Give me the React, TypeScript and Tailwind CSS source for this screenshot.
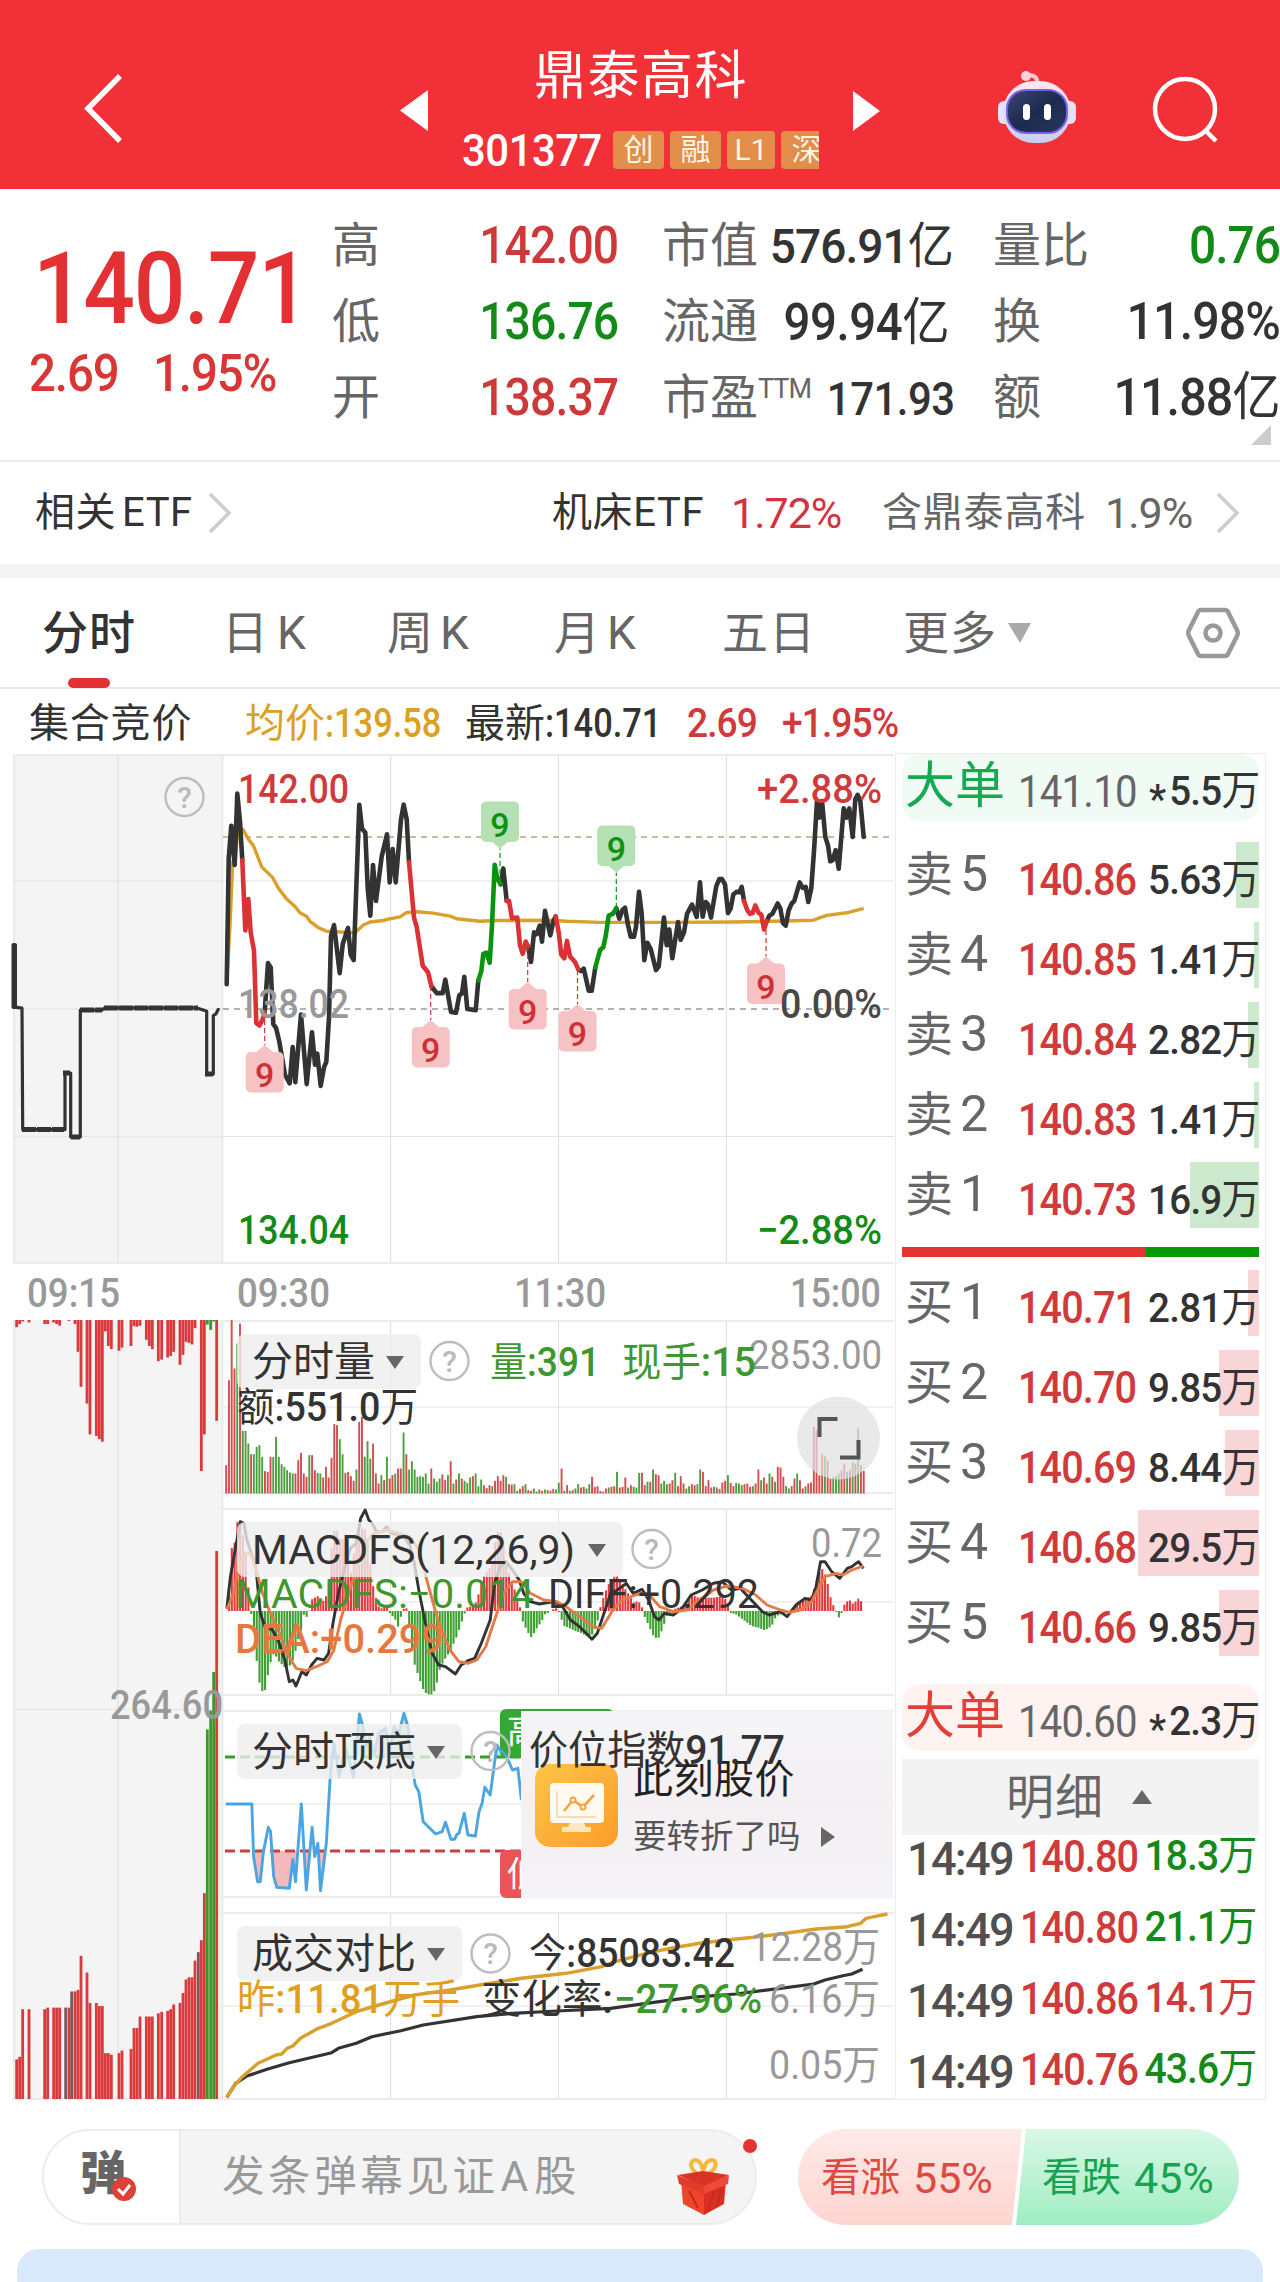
import { ReactNode } from "react"
import clsx from "clsx"

type Point = [number, number]

const RED = "#dc3235"
const GREEN = "#0a930f"
const INK = "#333333"
const GOLD = "#d9a02c"

// "x,y x,y ..." -> scaled svg points
function scale(data: string, ox: number, oy: number, sx: number, sy: number) {
  return data
    .split(" ")
    .map((p) => {
      const [x, y] = p.split(",").map(Number)
      return `${(ox + x / sx).toFixed(1)},${(oy + y / sy).toFixed(1)}`
    })
    .join(" ")
}

const morning = (d: string) => scale(d, 0, 740, 3, 2.703)
const afternoon = (d: string) => scale(d, 440, 740, 3, 2.703)
const volumeScale = (d: string) => scale(d, 200, 1300, 2.24, 3)
const lowerScale = (d: string) => scale(d, 200, 1690, 2.24, 3)

const priceSegments = [
  { color: INK, points: morning("680,660 686,320 694,232 704,338 712,145 720,220 727,325") },
  {
    color: INK,
    points: morning(
      "794,735 804,603 812,615 820,768 828,778 838,815 855,905 869,928 878,830 886,925 903,742 920,930 936,790 945,878 952,848 962,935 972,885 979,870 987,750 993,530 1002,500 1019,630 1028,552 1044,508 1052,580 1061,595 1078,175 1086,240 1096,250 1103,400 1111,475 1119,338 1128,435 1145,315 1161,255 1169,385 1178,295 1187,385 1203,215 1211,175 1220,215 1227,330"
    ),
  },
  { color: INK, points: morning("1294,665 1310,684 1328,684 1336,648 1353,735 1368,737 1378,690 1386,685 1393,640 1402,727 1427,730 1435,650") },
  { color: INK, points: afternoon("182,390 190,347 200,435") },
  { color: INK, points: afternoon("264,558 273,600 282,520 290,525 299,502 306,545 315,462 331,528 340,490 347,477") },
  { color: INK, points: afternoon("415,620 423,625 431,618 446,678 455,678 466,615") },
  {
    color: INK,
    points: afternoon(
      "529,455 538,483 547,460 555,453 564,500 572,532 582,532 588,505 597,410 605,470 613,595 622,548 632,565 648,622 656,612 672,480 680,555 688,512 697,590 714,492 722,540 732,520 741,470 756,445 770,478 780,385 788,478 797,438 804,445 813,480 829,395 838,376 846,376 855,390 864,468 872,455 880,418 890,410 898,412 905,397 912,435"
    ),
  },
  {
    color: INK,
    points: afternoon(
      "980,490 988,475 997,470 1013,442 1021,455 1029,495 1037,502 1046,460 1055,442 1063,435 1079,385 1088,400 1097,397 1105,438 1114,400 1122,300 1131,165 1138,210 1146,165 1156,262 1164,285 1171,328 1178,325 1187,298 1196,348 1211,185 1219,210 1228,185 1238,262 1246,160 1253,148 1261,165 1271,262"
    ),
  },
  { color: RED, points: morning("727,325 736,515 745,430 752,520 762,570 769,765 778,772 788,755 794,735") },
  { color: RED, points: morning("1227,330 1242,480 1250,505 1268,610 1284,628 1294,665") },
  { color: GREEN, points: afternoon("115,650 124,625 130,578 139,575 149,602 156,500 164,337 172,375 182,390") },
  { color: RED, points: afternoon("200,435 207,435 216,482 232,480 240,555 248,578 257,545 264,558") },
  { color: RED, points: afternoon("347,477 356,520 364,580 373,590 381,543 390,585 405,600 415,620") },
  { color: GREEN, points: afternoon("466,615 480,568 490,560 497,530 506,475 518,470 529,455") },
  { color: RED, points: afternoon("912,435 922,460 930,470 938,468 946,447 956,468 964,472 972,512 980,490") },
]

const averageLine =
  morning(
    "680,660 690,500 698,330 706,320 712,260 730,243 745,268 760,285 785,343 818,372 835,400 860,430 885,450 900,467 920,477 930,490 955,507 980,517 1020,519 1065,521 1090,500 1110,492 1150,488 1165,484 1200,478 1218,467 1250,464 1300,468 1350,476"
  ) +
  " " +
  afternoon("50,483 120,490 170,488 330,487 380,490 480,493 700,493 870,492 1000,490 1120,487 1160,474 1220,467 1271,455")

const auctionLine = morning(
  "46,722 66,725 68,1053 195,1053 195,900 212,900 212,1073 241,1073 241,730 305,730 315,724 590,724 610,730 620,733 620,903 640,903 640,745 648,740 655,728"
)

const signals = [
  { x: 264.7, tip: 1045, from: 1012, up: false },
  { x: 430.7, tip: 1020, from: 986, up: false },
  { x: 527.7, tip: 982, from: 946, up: false },
  { x: 577.5, tip: 1004, from: 970, up: false },
  { x: 766, tip: 956.5, from: 930, up: false },
  { x: 500, tip: 848.5, from: 882, up: true },
  { x: 616.3, tip: 872.5, from: 908, up: true },
]

const volumes = [
  85, 340, 520, 375, 450, 510, 188, 188, 150, 118, 118, 140, 145, 110, 67, 65, 110, 110, 170, 110, 88, 80, 70, 63, 60, 60,
  100, 122, 60, 50, 115, 115, 70, 62, 60, 48, 80, 48, 107, 208, 205, 163, 118, 62, 65, 52, 38, 72, 215, 230, 110, 157, 105,
  150, 60, 30, 55, 40, 110, 45, 55, 60, 75, 75, 183, 118, 72, 97, 72, 50, 52, 50, 60, 30, 75, 45, 35, 45, 57, 40, 55, 97, 30,
  42, 60, 45, 38, 32, 48, 52, 60, 22, 42, 25, 16, 25, 22, 38, 52, 38, 55, 50, 28, 27, 28, 8, 14, 22, 28, 10, 8, 15, 6, 12, 8,
  12, 10, 8, 14, 12, 32, 75, 8, 25, 8, 10, 15, 28, 18, 20, 15, 28, 50, 20, 22, 8, 6, 15, 18, 20, 22, 65, 18, 20, 48, 18, 25,
  20, 18, 62, 62, 25, 35, 35, 72, 58, 55, 30, 38, 28, 30, 40, 62, 22, 52, 30, 15, 22, 28, 25, 28, 72, 65, 22, 40, 18, 20, 18,
  14, 33, 38, 55, 32, 22, 32, 30, 25, 28, 30, 20, 22, 30, 72, 40, 48, 30, 60, 50, 35, 80, 78, 50, 22, 15, 22, 45, 60, 40, 15,
  22, 30, 33, 200, 190, 55, 118, 112, 98, 45, 50, 52, 60, 70, 90, 65, 70, 95, 90, 195, 85, 68,
]

const volumeSides =
  "rrrrgrgggrggggrrrggggggggrrrrrgrrggrrrrrrggrrrrgrrgggrrrgrgrrgrrgrggggggggrgggrrgrgrgrgggrgggrrrgrrrrgrrggrrgrrggrrgrrrggrgrgrggrrggrrrrgrgrrgrrrgrgggrrgrgrrgggrrgrrrggrrggrrrrgrgrrgrrgggrrrgrrgrrgrgrrrggrrgrrgrrrrrrgrrgggrrgrgrgrrrg"

const macdPoints: Point[] = [
  [58, 0], [64, 70], [71, 200], [77, 205], [83, 268], [90, 265], [97, 215], [103, 150], [108, 65], [113, 0], [115, -20], [121, -70],
  [127, -160], [133, -220], [140, -245], [146, -235], [152, -185], [158, -150], [165, -125], [175, -150], [190, -170], [200, -165],
  [210, -140], [218, -90], [225, -65], [232, -10], [240, -20], [245, 5], [250, 35], [262, 45], [275, 30], [282, 45], [288, 90],
  [294, 190], [300, 240], [307, 240], [313, 215], [325, 215], [337, 110], [345, 185], [357, 240], [365, 250], [372, 240], [380, 150],
  [387, 75], [395, 30], [402, 5], [420, 20], [425, -10], [435, -20], [444, -50], [452, 0], [460, 15], [466, -10], [470, -80],
  [480, -160], [490, -200], [500, -238], [508, -250], [518, -250], [527, -235], [535, -180], [545, -150], [560, -120], [575, -75],
  [590, -15], [597, 10], [610, 15], [620, 30], [627, 75], [637, 110], [645, 120], [655, 150], [663, 235], [672, 240], [680, 190],
  [690, 120], [700, 80], [715, 20], [722, -30], [732, -60], [742, -80], [752, -55], [765, -30], [772, -10], [780, -5], [790, 5],
  [800, 10], [806, -15], [815, -45], [825, -50], [840, -60], [852, -65], [865, -75], [880, -70], [890, -30], [896, 10], [905, 50],
  [918, 90], [930, 110], [940, 95], [950, 70], [960, 50], [970, 25], [980, 30], [988, 20], [993, -10], [1005, -45], [1015, -75],
  [1025, -85], [1035, -55], [1045, -15], [1052, -5], [1060, 5], [1090, 20], [1100, 50], [1115, 40], [1150, 40], [1170, 45],
  [1180, 30], [1187, -5], [1200, -10], [1215, -25], [1235, -45], [1250, -50], [1265, -58], [1280, -45], [1290, -15], [1310, -5],
  [1320, 0], [1330, 10], [1345, 30], [1360, 40], [1370, 45], [1380, 90], [1390, 130], [1397, 120], [1405, 85], [1412, 40],
  [1420, 10], [1425, -5], [1430, -20], [1437, -5], [1443, 20], [1453, 35], [1463, 20], [1473, 38], [1480, 30], [1486, -5],
]

function macdAt(x: number) {
  for (let i = 1; i < macdPoints.length; i++) {
    const [x0, y0] = macdPoints[i - 1]
    const [x1, y1] = macdPoints[i]
    if (x <= x1) return y0 + ((y1 - y0) * (x - x0)) / (x1 - x0)
  }
  return 0
}

const diffLine = volumeScale(
  "60,925 68,830 80,740 90,665 98,670 105,720 115,760 125,800 135,940 148,990 160,985 175,1020 190,1080 200,1145 208,1140 215,1158 228,1115 238,1125 250,1095 262,1075 278,1080 288,1060 298,970 310,880 325,800 337,745 350,730 360,655 370,630 378,660 388,675 395,695 408,695 418,680 428,700 455,705 470,735 480,790 490,870 505,970 520,1060 535,1095 550,1100 572,1122 585,1095 600,1082 615,1075 630,1030 650,960 660,850 672,800 685,785 700,810 715,840 725,880 740,905 760,912 790,905 810,915 830,960 850,980 865,1000 878,1018 890,1000 905,940 920,880 935,870 955,850 970,880 990,868 1005,900 1018,950 1028,960 1040,940 1060,945 1080,925 1100,885 1125,870 1150,850 1170,845 1190,870 1210,865 1235,900 1260,935 1275,945 1300,935 1315,950 1335,915 1355,895 1370,900 1380,860 1390,785 1400,785 1415,815 1433,835 1450,805 1460,800 1475,785 1486,805"
)

const deaLine = volumeScale(
  "60,928 75,880 88,800 100,760 112,760 122,790 140,880 155,930 175,990 195,1060 215,1105 238,1112 260,1100 285,1085 300,1050 315,960 335,870 355,790 375,720 390,700 420,690 445,700 470,710 490,750 510,850 535,970 560,1050 580,1085 600,1090 620,1080 640,1040 660,960 680,880 700,845 720,845 740,880 770,900 800,905 820,920 850,950 880,980 900,985 925,930 945,900 975,885 990,880 1010,890 1030,920 1060,935 1090,930 1120,900 1150,870 1180,858 1215,865 1245,885 1270,915 1300,930 1320,937 1345,930 1370,905 1385,865 1400,830 1425,820 1440,825 1460,810 1486,798"
)

const swingLine = lowerScale(
  "58,342 116,342 120,500 129,575 135,575 142,485 153,412 158,425 165,560 172,592 200,595 208,508 214,575 227,342 238,600 251,412 257,500 264,460 270,602 283,460 292,250 300,160 312,260 326,170 344,262 357,72 365,110 373,170 380,140 390,195 400,130 415,115 425,180 435,110 445,130 457,70 466,110 472,200 482,285 490,305 500,395 528,432 542,425 550,397 562,448 570,448 576,432 580,430 592,370 600,435 617,438 625,365 632,340 638,292 650,315 665,165 672,180 685,195 700,240 712,235 720,330"
)

const yesterdayLine = lowerScale(
  "60,1222 75,1190 95,1160 130,1120 155,1105 170,1095 183,1092 195,1075 208,1068 225,1045 265,1015 295,1000 350,965 400,945 480,915 560,900 640,882 720,865 820,850 900,830 930,815 1000,790 1060,773 1120,760 1180,750 1240,742 1300,732 1380,717 1450,710 1480,700 1492,685 1510,680 1540,672"
)

const todayLine = lowerScale(
  "60,1222 80,1180 105,1158 150,1138 200,1118 295,1088 310,1075 350,1060 385,1040 450,1022 500,1005 620,980 700,970 800,963 920,955 1000,940 1100,922 1200,912 1300,895 1375,882 1400,870 1440,857 1460,852 1484,838"
)

const unmatched =
  "50:52 59:46 68:41 87:43 134:46 143:46 161:43 170:46 179:49 207:40 225:46 234:99 243:166 261:198 270:257 289:260 298:266 307:271 316:60 325:88 334:94 357:97 366:91 393:88 402:50 411:51 420:49 439:76 448:88 457:94 475:117 485:114 503:110 512:107 521:99 540:124 549:105 558:80 567:82 576:85 585:54 604:327 613:257 622:47:g 632:57:g 641:41:g 650:231"

const matched =
  "50:1452 59:1447 68:1356 87:1356 134:1356 143:1353 161:1353 170:1353 179:1353 197:1353:k 207:1353 215:1322:k 225:1322 234:1319 243:1254 261:1286 270:1344 289:1344 298:1350 307:1350 316:1440 325:1440 334:1443 357:1440 366:1435 393:1432 402:1392 411:1392 420:1370 439:1370 448:1370 457:1370 475:1364 485:1361 503:1359 512:1356 521:1347 540:1344 549:1325 558:1299 567:1295 576:1295 585:1263 595:1247:k 604:1224 613:1134 622:821:g 632:785:g 641:711:g 650:480"

const barColor: Record<string, string> = { r: "#da3a3c", g: "#3b982b", k: "#76595b" }

function auctionBars(data: string) {
  return data.split(" ").map((item) => {
    const [x, y, side = "r"] = item.split(":")
    return { x: Number(x) / 3 - 1.4, y: 1300 + Number(y) / 1.912, color: barColor[side] }
  })
}

const hanRun = /([\u4e00-\u9fff]+)/

interface LabelProps {
  x: number
  y: number
  width: number
  color: string
  size?: number
  weight?: number
  children: string
}

// digits are medium, hanzi stay regular
function Label({ x, y, width, color, size = 40, weight = 500, children }: LabelProps) {
  return (
    <text x={x} y={y} textLength={width} lengthAdjust="spacingAndGlyphs" fill={color} fontSize={size} fontWeight={weight}>
      {children.split(hanRun).map((part, i) =>
        hanRun.test(part) ? (
          <tspan key={i} fontWeight={400}>
            {part}
          </tspan>
        ) : (
          part
        )
      )}
    </text>
  )
}

function Figure({ children, className }: { children: string; className?: string }) {
  return (
    <span className={clsx("inline-block font-medium", className)}>
      {children.split(hanRun).map((part, i) =>
        hanRun.test(part) ? (
          <span key={i} className="font-normal">
            {part}
          </span>
        ) : (
          part
        )
      )}
    </span>
  )
}

function HelpMark({ x, y }: { x: number; y: number }) {
  return (
    <g>
      <circle cx={x} cy={y} r={19} fill="none" stroke="#bdbdbd" strokeWidth={2.4} />
      <text x={x} y={y + 10.5} textAnchor="middle" fontSize={30} fontWeight={500} fill="#bababa">
        ?
      </text>
    </g>
  )
}

function Grid({ top, bottom, mid }: { top: number; bottom: number; mid: number[] }) {
  return (
    <g stroke="#e3e3e3" strokeWidth={1.2}>
      {[390.6, 558.5, 726.4].map((x) => (
        <line key={x} x1={x} x2={x} y1={top} y2={bottom} />
      ))}
      {mid.map((y) => (
        <line key={y} x1={223} x2={894} y1={y} y2={y} />
      ))}
      <line x1={223} x2={894} y1={top} y2={top} strokeWidth={2} stroke="#ebebeb" />
      <line x1={223} x2={894} y1={bottom} y2={bottom} strokeWidth={2} stroke="#ebebeb" />
    </g>
  )
}

function Signal({ x, tip, from, up }: { x: number; tip: number; from: number; up: boolean }) {
  const top = up ? tip - 47 : tip + 7
  const color = up ? GREEN : "#cf3036"
  const base = up ? tip - 7.5 : tip + 7.5
  return (
    <g>
      <line x1={x} x2={x} y1={from} y2={tip} stroke={color} strokeWidth={1.2} strokeDasharray="5 3" />
      <path d={`M${x - 9} ${base}L${x} ${tip}L${x + 9} ${base}Z`} fill={up ? "#b4e0b3" : "#f6c2c3"} />
      <rect x={x - 19} y={top} width={38} height={40.5} rx={5} fill={up ? "#b4e0b3" : "#f6c2c3"} />
      <text x={x} y={top + 35} textAnchor="middle" fontSize={34} fontWeight={500} fill={color}>
        9
      </text>
    </g>
  )
}

function ChartCanvas() {
  return (
    <svg width={895} height={1346} viewBox="0 754 895 1346" className="block font-['Roboto','Noto_Sans_CJK_SC',sans-serif]">
      <defs>
        <clipPath id="above">
          <rect x={220} y={1700} width={301} height={57} />
        </clipPath>
        <clipPath id="below">
          <rect x={220} y={1851} width={301} height={60} />
        </clipPath>
      </defs>

      {/* call auction background */}
      <rect x={13} y={755} width={209} height={508} fill="#f4f4f4" />
      <rect x={13} y={1320} width={209} height={779} fill="#f4f4f4" />
      <g stroke="#e6e6e6" strokeWidth={1.6} fill="none">
        <path d="M14 755V1263M118 755V1263M222.5 755V1263M14 1320V2099M118 1320V2099M222.5 1320V2099" />
        <path d="M13 755H223M13 881H223M13 1009H223M13 1136.5H223M13 1263H223M13 1709.5H223M13 2099H223" />
      </g>

      {/* price */}
      <Grid top={755} bottom={1263} mid={[881, 1136.5]} />
      <line x1={223} x2={890} y1={837} y2={837} stroke="#b8a47c" strokeWidth={1.6} strokeDasharray="6 5" />
      <line x1={223} x2={890} y1={1009} y2={1009} stroke="#999" strokeWidth={1.6} strokeDasharray="6 5" />
      <polyline points={averageLine} fill="none" stroke={GOLD} strokeWidth={3.4} strokeLinejoin="round" />
      {priceSegments.map((s) => (
        <polyline
          key={s.points}
          points={s.points}
          fill="none"
          stroke={s.color}
          strokeWidth={4.6}
          strokeLinejoin="round"
          strokeLinecap="round"
        />
      ))}
      <polyline points={auctionLine} fill="none" stroke={INK} strokeWidth={3.2} strokeLinejoin="round" strokeLinecap="round" />
      <rect x={11.5} y={943} width={5.5} height={66} rx={2} fill={INK} />
      <path d="M22 1129.6H64M80 1010H102M104 1008H198M63 1073H70M71 1137H80M205 1074H213" stroke={INK} strokeWidth={5} strokeDasharray="14 1" />
      {signals.map((s) => (
        <Signal key={s.x} {...s} />
      ))}
      <HelpMark x={184.5} y={797} />
      <Label x={238} y={803} width={111} color="#d03a3a">142.00</Label>
      <Label x={238} y={1018} width={111} color="#999">138.02</Label>
      <Label x={238} y={1244} width={111} color="#148a18">134.04</Label>
      <Label x={757} y={803} width={125} color="#d03a3a">+2.88%</Label>
      <Label x={780} y={1018} width={102} color="#484848">0.00%</Label>
      <Label x={757} y={1244} width={125} color="#148a18">−2.88%</Label>
      <Label x={27} y={1307} width={93} color="#999">09:15</Label>
      <Label x={237} y={1307} width={93} color="#999">09:30</Label>
      <Label x={514} y={1307} width={92} color="#999">11:30</Label>
      <Label x={790} y={1307} width={91} color="#999">15:00</Label>

      {/* call auction volume */}
      {auctionBars(unmatched).map((b) => (
        <rect key={b.x} x={b.x} y={1320} width={2.8} height={b.y - 1320} fill={b.color} />
      ))}
      {auctionBars(matched).map((b) => (
        <rect key={b.x} x={b.x} y={b.y} width={2.8} height={2099 - b.y} fill={b.color} />
      ))}
      <Label x={110} y={1719} width={113} color="#999">264.60</Label>

      {/* volume */}
      <Grid top={1321} bottom={1493} mid={[1407]} />
      {volumes.map((v, i) => (
        <rect
          key={i}
          x={225.2 + i * 2.772}
          y={1493.5 - v / 3}
          width={1.9}
          height={v / 3}
          fill={volumeSides[i] === "g" ? "#4b9f3e" : "#d44c50"}
        />
      ))}
      <Label x={749} y={1369} width={133} color="#999" weight={400}>2853.00</Label>

      {/* macd */}
      <Grid top={1509} bottom={1695} mid={[1602]} />
      {Array.from({ length: 231 }, (_, i) => {
        const v = macdAt(58 + i * 6.21)
        return (
          <rect
            key={i}
            x={225.2 + i * 2.772}
            y={v > 0 ? 1611 - v / 3 : 1611}
            width={2.1}
            height={Math.abs(v) / 3}
            fill={v > 0 ? "#e23a3c" : "#3f9f31"}
          />
        )
      })}
      <polyline points={diffLine} fill="none" stroke={INK} strokeWidth={2.9} strokeLinejoin="round" />
      <polyline points={deaLine} fill="none" stroke="#e47a48" strokeWidth={2.9} strokeLinejoin="round" />
      <Label x={811} y={1557} width={71} color="#999" weight={400}>0.72</Label>

      {/* intraday top / bottom */}
      <Grid top={1711} bottom={1897} mid={[1804]} />
      <polygon points={`226,1757 ${swingLine} 521,1757`} fill="#bfe6c9" clipPath="url(#above)" />
      <polygon points={`226,1851 ${swingLine} 521,1851`} fill="#f5b9bb" clipPath="url(#below)" />
      <line x1={225} x2={521} y1={1757} y2={1757} stroke="#3a9a2c" strokeWidth={3} strokeDasharray="10 5" />
      <line x1={225} x2={521} y1={1851} y2={1851} stroke="#c84040" strokeWidth={3} strokeDasharray="10 5" />
      <rect x={500} y={1709} width={114} height={49} rx={6} fill="#33a834" />
      <rect x={500} y={1850} width={114} height={48} rx={6} fill="#ea5458" />
      <text x={507} y={1743} fontSize={34} fill="#fff">高</text>
      <text x={507} y={1886} fontSize={34} fill="#fff">低</text>
      <polyline points={swingLine} fill="none" stroke="#4aa5e0" strokeWidth={2.9} strokeLinejoin="round" />

      {/* turnover comparison */}
      <Grid top={1913} bottom={2099} mid={[2006]} />
      <polyline points={todayLine} fill="none" stroke={INK} strokeWidth={3.2} strokeLinejoin="round" />
      <polyline points={yesterdayLine} fill="none" stroke={GOLD} strokeWidth={3.4} strokeLinejoin="round" />
      <Label x={750} y={1961} width={130} color="#999" weight={400}>12.28万</Label>
      <Label x={769} y={2013} width={111} color="#999" weight={400}>6.16万</Label>
      <Label x={769} y={2079} width={111} color="#999" weight={400}>0.05万</Label>
    </svg>
  )
}

// readings drawn on top of the indicator chips and the promo card
function ChartReadings() {
  return (
    <svg
      width={895}
      height={1346}
      viewBox="0 754 895 1346"
      className="absolute left-0 top-0 font-['Roboto','Noto_Sans_CJK_SC',sans-serif]"
    >
      <HelpMark x={449.5} y={1361} />
      <Label x={490} y={1376} width={110} color="#3f9730">量:391</Label>
      <Label x={622} y={1376} width={134} color="#3f9730">现手:15</Label>
      <Label x={237} y={1421} width={181} color={INK}>额:551.0万</Label>

      <HelpMark x={651.5} y={1549} />
      <Label x={235} y={1608} width={299} color="#3f9730" weight={400}>MACDFS:−0.014</Label>
      <Label x={548} y={1608} width={211} color={INK} weight={400}>DIFF:+0.292</Label>
      <Label x={235} y={1653} width={209} color="#e6783f">DEA:+0.299</Label>

      <HelpMark x={490.5} y={1751} />
      <Label x={529} y={1764} width={256} color={INK}>价位指数91.77</Label>

      <HelpMark x={490.5} y={1953.5} />
      <Label x={529} y={1967} width={206} color={INK}>今:85083.42</Label>
      <Label x={237} y={2013} width={223} color="#dfa022">昨:11.81万手</Label>
      <Label x={481} y={2013} width={132} color={INK}>变化率:</Label>
      <Label x={614} y={2013} width={148} color="#3f9730">−27.96%</Label>

      <circle cx={838.5} cy={1438} r={41.5} fill="#e0e0e0" fillOpacity={0.72} />
      <path d="M837.5 1419H819.500V1437M858.5 1440V1457.500H840" fill="none" stroke="#555" strokeWidth={4} />
    </svg>
  )
}

function Chip({ children, className }: { children: ReactNode; className: string }) {
  return (
    <div
      className={clsx(
        "absolute left-[237px] flex h-[55px] items-center justify-between rounded-lg bg-[#ededed]/80 pl-[15px] pr-[17px] pt-px text-[41px] leading-none text-[#333]",
        className
      )}
    >
      <span className="whitespace-nowrap">{children}</span>
      <svg width="18" height="13" viewBox="0 0 18 13">
        <path d="M0 0H18L9 13Z" fill="#666" />
      </svg>
    </div>
  )
}

function PromoCard() {
  return (
    <div className="absolute left-[521px] top-[957px] flex h-[188px] w-[372px] gap-[15px] bg-linear-to-b from-[#f5f5f8] via-[#f4eff2] to-[#f5f4f8] pl-3.5 pt-[53px]">
      <svg width="83" height="83" viewBox="0 0 83 83" className="shrink-0">
        <defs>
          <linearGradient id="promo" x1="0" y1="0" x2="1" y2="1">
            <stop offset="0" stopColor="#fdc446" />
            <stop offset="1" stopColor="#fd9c2b" />
          </linearGradient>
        </defs>
        <rect width="83" height="83" rx="15" fill="url(#promo)" />
        <rect x="15" y="19" width="54" height="40" rx="4" fill="#fffaf0" />
        <path d="M35 59H49L51 63H56V68H27V63H33Z" fill="#fde7c0" />
        <path d="M22 27V53H61" fill="none" stroke="#f6dcb8" strokeWidth="2" />
        <path d="M29 47L38 36L48 43L59 31" fill="none" stroke="#f4a340" strokeWidth="2.6" />
        <circle cx="38" cy="36" r="2.5" fill="#fff" stroke="#f4a340" strokeWidth="2" />
        <circle cx="48" cy="43" r="2.5" fill="#fff" stroke="#f4a340" strokeWidth="2" />
      </svg>
      <div className="flex flex-col gap-[20px] leading-none">
        <span className="-mt-1 text-[40px] tracking-[0.5px] text-[#222]">此刻股价</span>
        <span className="flex items-center gap-5 text-[33.5px] text-[#555]">
          要转折了吗
          <svg width="14" height="20" viewBox="0 0 14 20">
            <path d="M0 0L14 10L0 20Z" fill="#666" />
          </svg>
        </span>
      </div>
    </div>
  )
}

function RobotIcon() {
  return (
    <svg width="80" height="76" viewBox="0 0 80 76">
      <defs>
        <linearGradient id="visor" x1="0" y1="0" x2="1" y2="1">
          <stop offset="0" stopColor="#3c4676" />
          <stop offset="0.5" stopColor="#1e2a4f" />
          <stop offset="1" stopColor="#28365f" />
        </linearGradient>
        <linearGradient id="shell" x1="0" y1="0" x2="0" y2="1">
          <stop offset="0" stopColor="#ffe9ee" />
          <stop offset="1" stopColor="#c9cdf2" />
        </linearGradient>
      </defs>
      <path d="M40 14C41 8 38 5 31 5" fill="none" stroke="#f9cfd6" strokeWidth="4" />
      <circle cx="29" cy="6" r="5" fill="#fbd3da" />
      <rect x="1" y="31" width="78" height="23" rx="6" fill="#e4e2fa" />
      <rect x="6" y="11" width="68" height="62" rx="31" fill="url(#shell)" />
      <rect x="10" y="20" width="60" height="43" rx="19" fill="url(#visor)" stroke="#7a5fe8" strokeWidth="2" />
      <rect x="26" y="34" width="7" height="16" rx="3.5" fill="#fff" />
      <rect x="47" y="34" width="7" height="16" rx="3.5" fill="#fff" />
    </svg>
  )
}

function Header() {
  return (
    <header className="flex h-[189px] items-start bg-[#f13037] text-white">
      <svg width="44" height="72" viewBox="0 0 44 72" className="ml-[81px] mt-[73px]">
        <path d="M39 3L7 35.500L39 68" fill="none" stroke="#fff" strokeWidth="5.500" />
      </svg>
      <svg width="28" height="41" viewBox="0 0 28 41" className="ml-[275px] mt-[90px]">
        <path d="M28 0V41L0 20.500Z" fill="#fff" />
      </svg>
      <div className="ml-[34px] mt-[49px] w-[357px]">
        <h1 className="ml-[72px] h-[56px] text-[52px] font-normal leading-[56px] tracking-[1.5px]">鼎泰高科</h1>
        <div className="mt-[26px] flex h-[38px] items-center gap-1.5 overflow-hidden text-[30px] leading-none text-[#fff6e6]">
          <span className="mr-[7px] w-[138px] shrink-0 origin-left scale-x-[0.93] text-[45px] font-medium tracking-[-0.5px] text-white">
            301377
          </span>
          <span className="flex h-[38px] w-[51px] shrink-0 items-center justify-center rounded bg-[#e38d4a]">创</span>
          <span className="flex h-[38px] w-[51px] shrink-0 items-center justify-center rounded bg-[#e38d4a]">融</span>
          <span className="flex h-[38px] w-[48px] shrink-0 items-center justify-center rounded bg-[#e38d4a]">L1</span>
          <span className="flex h-[38px] w-[51px] shrink-0 items-center justify-center rounded-l bg-[#e38d4a]">深</span>
        </div>
      </div>
      <svg width="27" height="40" viewBox="0 0 27 40" className="ml-[34px] mt-[91px]">
        <path d="M0 0V40L27 20Z" fill="#fff" />
      </svg>
      <div className="ml-[117px] mt-[70px]">
        <RobotIcon />
      </div>
      <svg width="70" height="70" viewBox="0 0 70 70" className="ml-[74px] mt-[75px]">
        <circle cx="34" cy="34" r="30" fill="none" stroke="#fff" strokeWidth="4.500" />
        <path d="M54 55L65 66" stroke="#fff" strokeWidth="4.500" />
      </svg>
    </header>
  )
}

interface StatProps {
  label: ReactNode
  value: string
  className?: string
}

function Stat({ label, value, className }: StatProps) {
  return (
    <div className="flex h-[76px] items-center justify-between whitespace-nowrap">
      <span className="text-[48px] tracking-normal text-[#666]">{label}</span>
      <Figure className={clsx("origin-right", className)}>{value}</Figure>
    </div>
  )
}

function Quote() {
  return (
    <section className="relative flex h-[271px] leading-none">
      <div className="w-[332px] shrink-0 pl-[29px] pt-[49px] text-[#d93636]">
        <div className="ml-[4px] origin-left scale-x-[0.9] text-[101px] font-medium tracking-[-1.5px] text-[#e33033]">
          140.71
        </div>
        <div className="mt-[9px] flex origin-left scale-x-[0.93] gap-[37px] text-[51px] font-medium tracking-[-1.2px]">
          <span>2.69</span>
          <span>1.95%</span>
        </div>
      </div>
      <div className="w-[286px] shrink-0 pt-[19px] text-[52px] tracking-[-1px]">
        <Stat label="高" value="142.00" className="scale-x-[0.89] text-[#cf3838]" />
        <Stat label="低" value="136.76" className="scale-x-[0.89] text-[#148a18]" />
        <Stat label="开" value="138.37" className="scale-x-[0.89] text-[#cf3838]" />
      </div>
      <div className="ml-[44px] w-[287px] shrink-0 pt-[19px] text-[#333]">
        <Stat label="市值" value="576.91亿" className="scale-x-[0.94] text-[49px] tracking-[-1px]" />
        <Stat label="流通" value="99.94亿" className="scale-x-[0.93] text-[51px] tracking-[-0.5px]" />
        <Stat
          label={
            <>
              市盈<sup className="relative -top-4 align-baseline text-[27px] tracking-[-1px]">TTM</sup>
            </>
          }
          value="171.93"
          className="scale-x-[0.89] text-[47px] tracking-[-0.5px]"
        />
      </div>
      <div className="ml-[44px] w-[287px] shrink-0 pt-[19px] text-[52px] tracking-[-1px] text-[#333]">
        <Stat label="量比" value="0.76" className="scale-x-[0.92] text-[#148a18]" />
        <Stat label="换" value="11.98%" className="scale-x-[0.93]" />
        <Stat label="额" value="11.88亿" className="scale-x-[0.93]" />
      </div>
      <svg width="20" height="20" viewBox="0 0 20 20" className="absolute bottom-[15px] right-[9px]">
        <path d="M20 0V20H0Z" fill="#ccc" />
      </svg>
    </section>
  )
}

function Chevron() {
  return (
    <svg width="24" height="42" viewBox="0 0 24 42">
      <path d="M2 2L21 21L2 40" fill="none" stroke="#ccc" strokeWidth="3.5" />
    </svg>
  )
}

function RelatedEtf() {
  return (
    <section className="flex h-[104px] items-center whitespace-nowrap border-t-2 border-[#ececec] pl-[35px] text-[40px] leading-none text-[#333]">
      <span className="w-[173px] tracking-[0.5px]">
        相关<span className="ml-1.5">ETF</span>
      </span>
      <Chevron />
      <span className="ml-[320px] w-[179px] tracking-[0.6px]">机床ETF</span>
      <span className="w-[151px] text-[43px] tracking-[-1px] text-[#d0343f]">1.72%</span>
      <span className="w-[223px] tracking-[0.8px] text-[#666]">含鼎泰高科</span>
      <span className="w-[111px] text-[43px] tracking-[-1px] text-[#666]">1.9%</span>
      <Chevron />
    </section>
  )
}

function Tabs() {
  return (
    <nav className="flex h-[111px] items-center whitespace-nowrap border-b-2 border-[#e9e9e9] pl-[42px] text-[46px] leading-none tracking-[1px] text-[#666]">
      <span className="relative w-[180px] font-medium text-[#333]">
        分时
        <span className="absolute -bottom-[32px] left-[26px] h-[10px] w-[42px] rounded-full bg-[#e33033]" />
      </span>
      <span className="w-[165px]">日<span className="ml-2">K</span></span>
      <span className="w-[167px]">周<span className="ml-1.5">K</span></span>
      <span className="w-[168px]">月<span className="ml-1.5">K</span></span>
      <span className="w-[181px]">五日</span>
      <span className="w-[104px]">更多</span>
      <svg width="25" height="20" viewBox="0 0 25 20">
        <path d="M1 0H24L13 20Z" fill="#aaa" />
      </svg>
      <svg width="54" height="52" viewBox="0 0 54 52" className="ml-[154px]">
        <path
          d="M15 3H39Q41 3 42 5L51 23Q52.5 26 51 29L42 47Q41 49 39 49H15Q13 49 12 47L3 29Q1.5 26 3 23L12 5Q13 3 15 3Z"
          fill="none"
          stroke="#999"
          strokeWidth="4.5"
        />
        <circle cx="27" cy="26" r="7.5" fill="none" stroke="#999" strokeWidth="4.5" />
      </svg>
    </nav>
  )
}

interface Order {
  label: string
  level: number
  price: string
  volume: string
  bar: number
}

const asks: Order[] = [
  { label: "卖", level: 5, price: "140.86", volume: "5.63万", bar: 23 },
  { label: "卖", level: 4, price: "140.85", volume: "1.41万", bar: 5 },
  { label: "卖", level: 3, price: "140.84", volume: "2.82万", bar: 11 },
  { label: "卖", level: 2, price: "140.83", volume: "1.41万", bar: 5 },
  { label: "卖", level: 1, price: "140.73", volume: "16.9万", bar: 69 },
]

const bids: Order[] = [
  { label: "买", level: 1, price: "140.71", volume: "2.81万", bar: 11 },
  { label: "买", level: 2, price: "140.70", volume: "9.85万", bar: 40 },
  { label: "买", level: 3, price: "140.69", volume: "8.44万", bar: 34 },
  { label: "买", level: 4, price: "140.68", volume: "29.5万", bar: 121 },
  { label: "买", level: 5, price: "140.66", volume: "9.85万", bar: 40 },
]

const trades = [
  { time: "14:49", price: "140.80", volume: "18.3万", up: false },
  { time: "14:49", price: "140.80", volume: "21.1万", up: false },
  { time: "14:49", price: "140.86", volume: "14.1万", up: true },
  { time: "14:49", price: "140.76", volume: "43.6万", up: false },
]

function OrderRow({ order, ask }: { order: Order; ask?: boolean }) {
  return (
    <div className="relative flex h-[66px] items-center">
      <div
        className={clsx("absolute inset-y-0 right-0", ask ? "bg-[#cde9cd]" : "bg-[#f8d5d6]")}
        style={{ width: order.bar }}
      />
      <span className="relative -mt-0.5 w-[116px] shrink-0 pl-[3px] text-[48px] text-[#666]">
        {order.label}
        <span className="ml-[7px] text-[50px]">{order.level}</span>
      </span>
      <Figure className="relative mt-2.5 origin-left scale-x-[0.9] text-[44px] tracking-[-1px] text-[#d03a3a]">
        {order.price}
      </Figure>
      <Figure className="absolute right-0 mt-2.5 origin-right scale-x-[0.94] text-[41px] tracking-[-0.8px] text-[#333]">
        {order.volume}
      </Figure>
    </div>
  )
}

function BigOrder({ price, volume, className }: { price: string; volume: string; className: string }) {
  return (
    <div className={clsx("relative flex h-[67px] items-center rounded-[18px]", className)}>
      <span className="-mt-1 w-[116px] shrink-0 pl-[3px] text-[50px]">大单</span>
      <span className="mt-2 origin-left scale-x-[0.91] text-[44px] tracking-[-0.8px] text-[#666]">{price}</span>
      <span className="absolute right-0 mt-2 origin-right scale-x-[0.94] text-[41px] tracking-[-0.8px] text-[#333]">
        <span className="relative top-2 mr-1 font-medium">*</span>
        <Figure>{volume}</Figure>
      </span>
    </div>
  )
}

function OrderBook() {
  return (
    <aside className="h-[1347px] w-[371px] border border-[#ececec] px-[6px] leading-none whitespace-nowrap">
      <BigOrder price="141.10" volume="5.5万" className="bg-[#f1fbf6] text-[#15a951]" />
      <div className="mt-[21px] flex flex-col gap-[14px]">
        {asks.map((o) => (
          <OrderRow key={o.level} order={o} ask />
        ))}
      </div>
      <div className="mt-[19px] flex h-[10px]">
        <div className="w-[244px] bg-[#e23232]" />
        <div className="grow bg-[#059a05]" />
      </div>
      <div className="mt-[13px] flex flex-col gap-[14px]">
        {bids.map((o) => (
          <OrderRow key={o.level} order={o} />
        ))}
      </div>
      <div className="mt-[28px]">
        <BigOrder price="140.60" volume="2.3万" className="bg-[#fff3f2] text-[#e43f36]" />
      </div>
      <div className="mt-[8px] flex h-[76px] items-center bg-[#f3f3f3] pl-[104px] text-[48px] text-[#666]">
        <span className="w-[126px] pt-0.5 tracking-[1px]">明细</span>
        <svg width="20" height="14" viewBox="0 0 20 14">
          <path d="M0 14L10 0L20 14Z" fill="#666" />
        </svg>
      </div>
      {trades.map((t, i) => (
        <div key={i} className="relative flex h-[71px] items-start pl-[5px] font-medium">
          <span className="w-[113px] origin-left scale-x-[0.96] text-[47px] tracking-[-1.8px] text-[#505050]">{t.time}</span>
          <Figure className="origin-left scale-x-[0.9] text-[44px] tracking-[-1px] text-[#d03a3a]">{t.price}</Figure>
          <Figure
            className={clsx(
              "absolute right-[3px] origin-right scale-x-[0.93] text-[42px] tracking-[-1px]",
              t.up ? "text-[#d03a3a]" : "text-[#148a18]"
            )}
          >
            {t.volume}
          </Figure>
        </div>
      ))}
    </aside>
  )
}

function GiftIcon() {
  return (
    <svg width="54" height="58" viewBox="0 0 54 58">
      <path d="M27 17C14 15 12 3 19 2C25 2 27 10 27 17C27 10 30 2 36 2C43 3 40 15 27 17Z" fill="none" stroke="#f4b83c" strokeWidth="4" />
      <path d="M2 17L27 13L53 17L28 29Z" fill="#d93327" />
      <path d="M5 22L28 29V57L7 46Z" fill="#f0442c" />
      <path d="M28 29L50 22L48 46L28 57Z" fill="#d92f22" />
      <path d="M1 17L28 28V36L3 26Z" fill="#e23a2b" />
      <path d="M28 28L53 17L52 26L28 36Z" fill="#ef4a38" />
      <path d="M13 33L22 50M38 33L32 52M45 30L41 48" stroke="#c9281d" strokeWidth="2" />
    </svg>
  )
}

function BottomBar() {
  return (
    <footer className="px-[17px] leading-none">
      <div className="flex h-[96px] items-center pl-[25px] whitespace-nowrap">
        <div className="relative flex h-[96px] w-[715px] items-center rounded-full border-2 border-[#ececec] bg-[#f4f4f4]">
          <div className="relative flex h-full w-[137px] items-center rounded-l-full border-r-2 border-[#ececec] bg-white pl-[36px]">
            <span className="-mt-2 text-[46px] font-black text-[#666]">弹</span>
            <svg width="24" height="24" viewBox="0 0 24 24" className="absolute left-[68px] top-[46px]">
              <circle cx="12" cy="12" r="12" fill="#dd4238" />
              <path d="M6 12L11 17L18 8" fill="none" stroke="#fff" strokeWidth="3" />
            </svg>
          </div>
          <span className="ml-[41px] text-[42.5px] tracking-[3.6px] text-[#999]">
            发条弹幕见证<span className="mx-0.5">A</span>股
          </span>
          <div className="absolute left-[632px] top-[27px]">
            <GiftIcon />
          </div>
          <span className="absolute right-[-2px] top-[8px] size-[14px] rounded-full bg-[#e23232]" />
        </div>
        <div className="ml-[41px] flex h-[96px] w-[224px] items-center rounded-l-full bg-linear-to-b from-[#feeae8] to-[#fdd5d0] pl-[23px] pt-0.5 text-[39.5px] text-[#dc4a42] [clip-path:polygon(0_0,100%_0,95.5%_100%,0_100%)]">
          看涨 <span className="ml-[13px] text-[43px]">55%</span>
        </div>
        <div className="-ml-[6px] flex h-[96px] w-[223px] items-center rounded-r-full bg-linear-to-b from-[#d8f8e6] to-[#a0edc2] pl-[26px] pt-0.5 text-[39.5px] text-[#17a352] [clip-path:polygon(4.5%_0,100%_0,100%_100%,0_100%)]">
          看跌 <span className="ml-[13px] text-[43px]">45%</span>
        </div>
      </div>
      <div className="mt-[24px] h-[33px] rounded-t-[22px] bg-[#dae9fb]" />
    </footer>
  )
}

export default function App() {
  return (
    <div className="h-[2282px] w-[1280px] overflow-hidden bg-white font-['Roboto','Noto_Sans_CJK_SC',sans-serif]">
      <Header />
      <Quote />
      <RelatedEtf />
      <div className="h-[14px] bg-[#f4f4f4]" />
      <Tabs />
      <div className="flex h-[64px] items-center whitespace-nowrap pl-[29px] pt-1.5 text-[40px] leading-none text-[#333]">
        <span className="w-[216px] tracking-[0.8px]">集合竞价</span>
        <span className="w-[220px] text-[#dba125]">
          均价<Figure className="origin-left scale-x-[0.86]">:139.58</Figure>
        </span>
        <span className="w-[222px]">
          最新<Figure className="origin-left scale-x-[0.86]">:140.71</Figure>
        </span>
        <Figure className="w-[95px] origin-left scale-x-[0.93] tracking-[-1px] text-[#d03a3a]">2.69</Figure>
        <Figure className="origin-left scale-x-[0.93] tracking-[-1px] text-[#d03a3a]">+1.95%</Figure>
      </div>
      <main className="flex">
        <div className="relative mt-px h-[1346px] w-[895px] shrink-0">
          <ChartCanvas />
          <Chip className="top-[580px] w-[184px]">分时量</Chip>
          <Chip className="top-[768px] w-[386px]">MACDFS(12,26,9)</Chip>
          <Chip className="top-[970px] w-[225px]">分时顶底</Chip>
          <Chip className="top-[1172px] w-[225px]">成交对比</Chip>
          <PromoCard />
          <ChartReadings />
        </div>
        <OrderBook />
      </main>
      <div className="h-[29px]" />
      <BottomBar />
    </div>
  )
}
